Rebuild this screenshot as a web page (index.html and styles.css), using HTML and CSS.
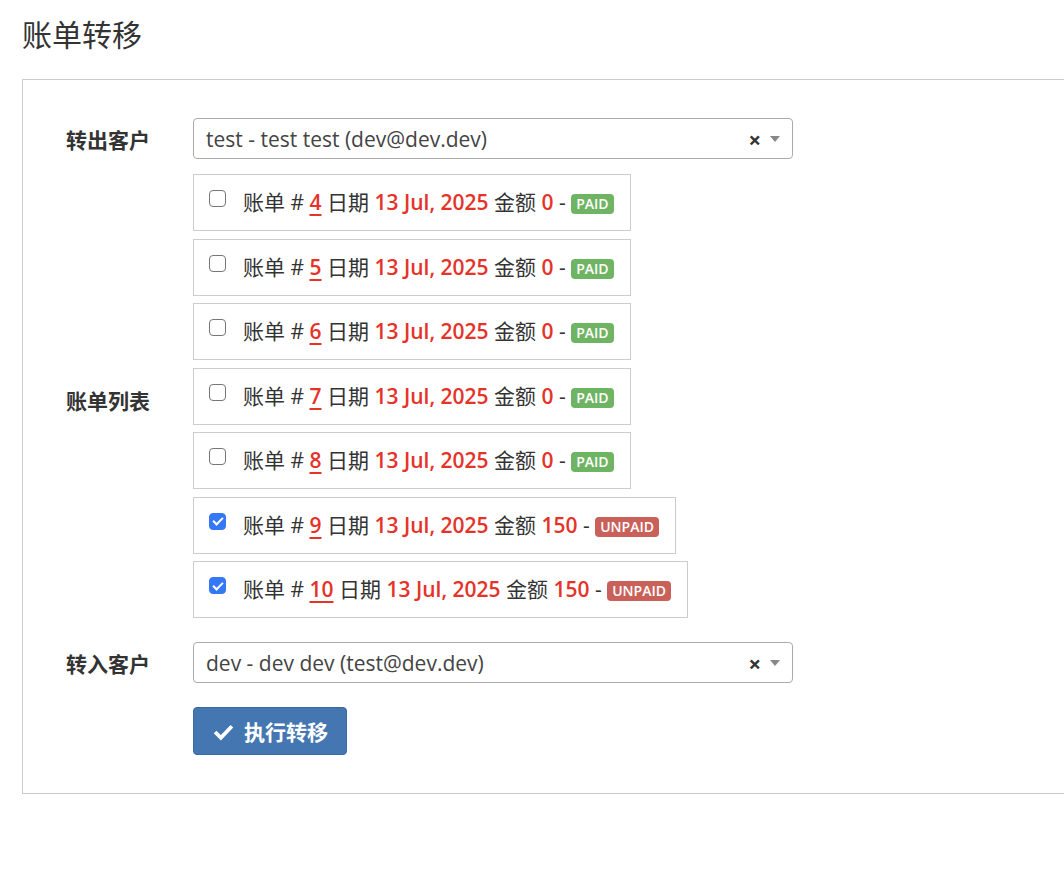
FILE: index.html
```html
<!DOCTYPE html>
<html lang="zh">
<head>
<meta charset="utf-8">
<title>账单转移</title>
<link rel="stylesheet" href="styles.css">
</head>
<body>
<h1 class="title">账单转移</h1>
<div class="panel">
  <div class="row">
    <div class="label">转出客户</div>
    <div class="control">
      <div class="select">
        <span class="select-text">test - test test (dev@dev.dev)</span>
        <span class="select-clear">×</span>
        <span class="select-arrow"></span>
      </div>
    </div>
  </div>
  <div class="row row-list">
    <div class="label">账单列表</div>
    <div class="control">
      <div class="invoice"><input type="checkbox" class="cb"><span class="inv-text">账单 # <a class="num">4</a> 日期 <span class="red">13 Jul, 2025</span> 金额 <span class="red">0</span> - <span class="badge paid">PAID</span></span></div>
      <div class="invoice"><input type="checkbox" class="cb"><span class="inv-text">账单 # <a class="num">5</a> 日期 <span class="red">13 Jul, 2025</span> 金额 <span class="red">0</span> - <span class="badge paid">PAID</span></span></div>
      <div class="invoice"><input type="checkbox" class="cb"><span class="inv-text">账单 # <a class="num">6</a> 日期 <span class="red">13 Jul, 2025</span> 金额 <span class="red">0</span> - <span class="badge paid">PAID</span></span></div>
      <div class="invoice"><input type="checkbox" class="cb"><span class="inv-text">账单 # <a class="num">7</a> 日期 <span class="red">13 Jul, 2025</span> 金额 <span class="red">0</span> - <span class="badge paid">PAID</span></span></div>
      <div class="invoice"><input type="checkbox" class="cb"><span class="inv-text">账单 # <a class="num">8</a> 日期 <span class="red">13 Jul, 2025</span> 金额 <span class="red">0</span> - <span class="badge paid">PAID</span></span></div>
      <div class="invoice"><input type="checkbox" class="cb" checked><span class="inv-text">账单 # <a class="num">9</a> 日期 <span class="red">13 Jul, 2025</span> 金额 <span class="red">150</span> - <span class="badge unpaid">UNPAID</span></span></div>
      <div class="invoice"><input type="checkbox" class="cb" checked><span class="inv-text">账单 # <a class="num">10</a> 日期 <span class="red">13 Jul, 2025</span> 金额 <span class="red">150</span> - <span class="badge unpaid">UNPAID</span></span></div>
    </div>
  </div>
  <div class="row row-to">
    <div class="label">转入客户</div>
    <div class="control">
      <div class="select">
        <span class="select-text">dev - dev dev (test@dev.dev)</span>
        <span class="select-clear">×</span>
        <span class="select-arrow"></span>
      </div>
    </div>
  </div>
  <div class="row row-btn">
    <div class="label"></div>
    <div class="control">
      <button class="btn" type="button">
        <svg class="btn-icon" viewBox="0 0 20 20" width="21" height="21"><path d="M2 10.5 L7.5 16 L18 5" fill="none" stroke="#fff" stroke-width="3.6" stroke-linecap="butt" stroke-linejoin="miter"/></svg>
        <span>执行转移</span>
      </button>
    </div>
  </div>
</div>
</body>
</html>
```
FILE: styles.css
```css
html { overflow-x: hidden; }
body {
  margin: 0;
  padding: 0 0 0 22px;
  background: #fff;
  color: #333;
  font-family: "Open Sans", "Noto Sans CJK SC", sans-serif;
  font-size: 21px;
}
.title {
  margin: 0;
  padding-top: 15px;
  height: 79px;
  box-sizing: border-box;
  font-size: 30px;
  font-weight: 400;
  line-height: 40px;
  color: #333;
}
.panel {
  border: 1px solid #ccc;
  margin-right: -40px;
  padding: 38px 0 38px 43px;
}
.row {
  display: flex;
  align-items: center;
}
.row-list { margin-top: 15px; }
.row-to { margin-top: 16.5px; }
.row-btn { margin-top: 24px; }
.label {
  width: 127px;
  flex: none;
  font-weight: 700;
  font-size: 21px;
  color: #333;
}
.control { flex: none; }
.select {
  width: 600px;
  height: 41px;
  box-sizing: border-box;
  border: 1px solid #aaa;
  border-radius: 4px;
  display: flex;
  align-items: center;
  padding: 0 12px 0 12px;
  color: #444;
}
.select-text { flex: 1; }
.select-clear {
  font-weight: 700;
  font-size: 22px;
  color: #333;
  margin-right: 9px;
  line-height: 1;
}
.select-arrow {
  width: 0;
  height: 0;
  border-left: 5px solid transparent;
  border-right: 5px solid transparent;
  border-top: 6px solid #888;
}
.invoice {
  width: max-content;
  border: 1px solid #ccc;
  height: 57px;
  box-sizing: border-box;
  padding: 0 16px 0 15px;
  display: flex;
  align-items: center;
  margin-bottom: 7.5px;
}
.cb {
  appearance: none;
  -webkit-appearance: none;
  margin: 0 17px 0 0;
  width: 17px;
  height: 17px;
  box-sizing: border-box;
  border: 1px solid #767676;
  border-radius: 4px;
  background: #fff;
  position: relative;
  top: -4px;
  flex: none;
}
.cb:checked {
  background: #3478f6;
  border-color: #3478f6;
}
.cb:checked::after {
  content: "";
  position: absolute;
  left: 5px;
  top: 1.5px;
  width: 4px;
  height: 8px;
  border-right: 2.5px solid #fff;
  border-bottom: 2.5px solid #fff;
  transform: rotate(45deg);
}
.inv-text {
  white-space: nowrap;
  line-height: 27px;
}
.num {
  color: #e5332a;
  font-weight: 600;
  text-decoration: underline;
  text-decoration-thickness: 2px;
  text-underline-offset: 4px;
}
.red {
  color: #e5332a;
  font-weight: 600;
}
.badge {
  display: inline-block;
  font-size: 14px;
  font-weight: 600;
  color: #fff;
  line-height: 20px;
  padding: 0 5px;
  border-radius: 4px;
  vertical-align: 1px;
}
.paid { background: #6fb463; }
.unpaid { background: #c9605a; }
.btn {
  display: flex;
  align-items: center;
  gap: 10px;
  height: 48px;
  padding: 0 18px 0 19px;
  background: #4477b2;
  border: 1px solid #3a6aa3;
  border-radius: 4px;
  color: #fff;
  font-family: "Open Sans", "Noto Sans CJK SC", sans-serif;
  font-size: 21px;
  font-weight: 600;
}
.btn-icon { display: block; }
```
